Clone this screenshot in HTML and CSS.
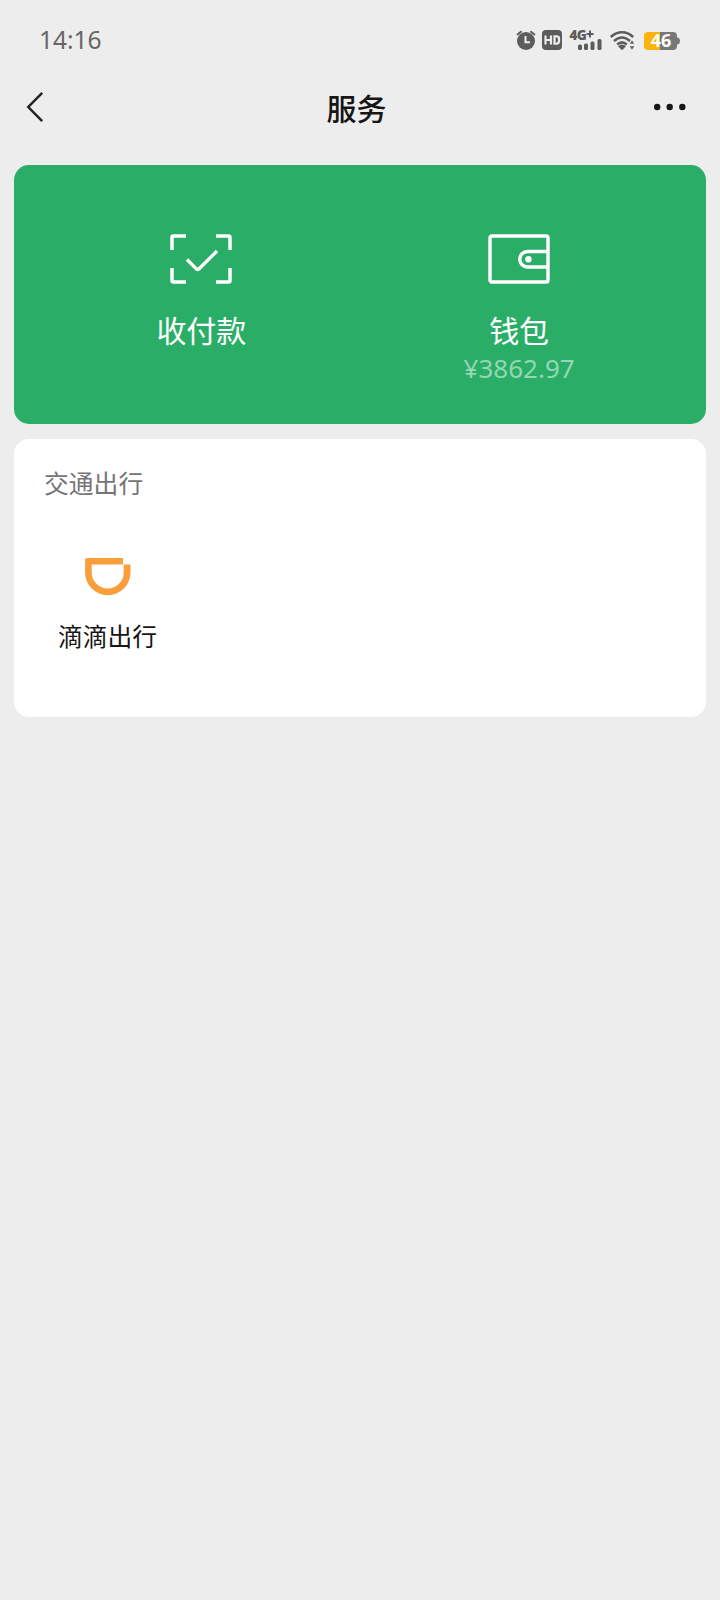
FILE: index.html
```html
<!DOCTYPE html>
<html lang="zh-CN">
<head>
<meta charset="utf-8">
<title>服务</title>
<link rel="stylesheet" href="styles.css">
</head>
<body>
<div class="status">
  <span class="time">14:16</span>
  <svg class="status-icons" width="170" height="30" viewBox="0 0 170 30">
    <g fill="#5c5c5c">
      <circle cx="11" cy="16" r="9"/>
      <path d="M2.600 9.500 6 6.800M19.400 9.500 16 6.800" stroke="#5c5c5c" stroke-width="2" stroke-linecap="round"/>
      <path d="M10.500 11v6.300h4.500" fill="none" stroke="#ededed" stroke-width="2"/>
      <rect x="27" y="5" width="20" height="20" rx="4"/>
      <text class="net" x="54.500" y="15">4G</text>
      <path d="M71.500 8h7v2h-7zM74 5.500h2v7h-2z"/>
      <rect x="63" y="19.500" width="4" height="5.500" rx="1.500"/>
      <rect x="69" y="18.500" width="4" height="6.500" rx="1.500"/>
      <rect x="75.500" y="16.500" width="4" height="8.500" rx="1.500"/>
      <rect x="82.500" y="14" width="4" height="11" rx="1.500"/>
      <path d="M107 25.200l-4-4q4-3.300 8 0z"/>
      <path d="M114.700 18.800l2.300-3.300 2.300 3.300zM114.700 21.300l2.300 3.400 2.300-3.400z"/>
    </g>
    <path d="M30.500 10.500v9M36 10.500v9M30.500 15H36M39.500 11.400v7.200h2q2.500 0 2.500-2v-3.200q0-2-2.500-2z" fill="none" stroke="#ededed" stroke-width="2.200"/>
    <path class="wifi" d="M95.800 12Q101 7.300 107 7.300T118.200 12M99 16q8-7 16 0M102.200 19.500q4.800-4.300 9.600 0"/>
    <path d="M133 7h12v18h-12a4 4 0 0 1-4-4V11a4 4 0 0 1 4-4z" fill="#fbb40a"/>
    <path d="M145 7h13a4 4 0 0 1 4 4v1.500q3 .3 3 3.500t-3 3.500V21a4 4 0 0 1-4 4H145z" fill="#777"/>
    <text class="battery" x="146" y="22.200">46</text>
  </svg>
</div>
<header class="nav">
  <svg width="18" height="32" viewBox="0 0 18 32"><path d="M16.200 1.800 2.300 16l13.900 14.200" fill="none" stroke="#222" stroke-width="2.500"/></svg>
  <h1>服务</h1>
  <svg width="32" height="8" viewBox="0 0 32 8" fill="#161616"><circle cx="3.200" cy="4" r="3.200"/><circle cx="15.700" cy="4" r="3.200"/><circle cx="28.300" cy="4" r="3.200"/></svg>
</header>
<main>
  <section class="card pay">
    <div class="entry">
      <svg width="62" height="50" viewBox="0 0 62 50" fill="none" stroke="#fff" stroke-width="3.500">
        <path d="M2 16V3.500Q2 2 3.500 2H16M46 2h12.500Q60 2 60 3.500V16M60 34v12.500q0 1.500-1.500 1.500H46M16 48H3.500Q2 48 2 46.500V34"/>
        <path d="M17 25.500 26.500 35q1.200 1.200 2.400 0L47 17" stroke-width="3.300"/>
      </svg>
      <span class="label">收付款</span>
    </div>
    <div class="entry wallet">
      <svg width="62" height="50" viewBox="0 0 62 50" fill="none" stroke="#fff" stroke-width="3.400">
        <rect x="2" y="2" width="58" height="46" rx="1.800"/>
        <path d="M60 17.500H39.500a7.750 7.750 0 0 0 0 15.500H60"/>
        <circle cx="40.500" cy="25.300" r="3.200" fill="#fff" stroke="none"/>
      </svg>
      <span class="label">钱包</span>
      <span class="amount">¥3862.97</span>
    </div>
  </section>
  <section class="card travel">
    <h2>交通出行</h2>
    <div class="service">
      <svg width="46" height="38" viewBox="0 0 46 38"><path fill="#fa9d3b" fill-rule="evenodd" d="M2 0h36v6.500h7.500v8a22.700 22.700 0 0 1-45.400 0V2Q0 0 2 0zM6.700 6.500v8a16 16 0 0 0 32 0v-8z"/></svg>
      <span>滴滴出行</span>
    </div>
  </section>
</main>
</body>
</html>
```
FILE: styles.css
```css
* { box-sizing: border-box; }
body {
  margin: 0;
  min-height: 1600px;
  background: #ededed;
  color: #161616;
  font-family: "Noto Sans CJK SC", sans-serif;
}
svg { display: block; flex: none; }
.status {
  height: 80px;
  padding: 0 35px 0 39px;
  display: flex;
  align-items: center;
  justify-content: space-between;
}
.time {
  font: 24.5px/30px "Noto Sans", sans-serif;
  color: #666;
}
.net { font: 800 13.5px "Open Sans", sans-serif; letter-spacing: -.6px; }
.battery { font: 700 18px "Noto Sans", sans-serif; fill: #fff; text-anchor: middle; }
.wifi { fill: none; stroke: #5c5c5c; stroke-width: 2.5; }
.nav {
  height: 85px;
  padding: 12px 34px 0 26px;
  display: flex;
  justify-content: space-between;
  align-items: flex-start;
}
.nav svg:first-child { margin-top: -1px; }
.nav svg:last-child { margin-top: 11px; }
.nav h1 {
  margin: -7px 0 0 15px;
  font-size: 30px;
  line-height: 44px;
  font-weight: 500;
}
main { padding: 0 14.5px 0 14px; }
.card { border-radius: 15px; }
.pay {
  height: 259px;
  padding: 69px 29px 0;
  background: #2aae67;
  display: grid;
  grid-template-columns: 1fr 1fr;
}
.entry {
  display: flex;
  flex-direction: column;
  align-items: center;
  color: #fff;
}
.wallet { padding-left: 2px; }
.label { margin-top: 23px; font-size: 30px; line-height: 44px; }
.amount {
  margin-top: 1px;
  font: 26px/32px "Noto Sans", sans-serif;
  color: #94d7b3;
}
.travel {
  margin-top: 15px;
  height: 278px;
  padding: 25px 29px 26px 30px;
  background: #fff;
}
.travel h2 {
  margin: 0;
  font-size: 24.8px;
  line-height: 36px;
  font-weight: 400;
  color: #757575;
}
.service {
  width: 127px;
  margin-top: 57.5px;
  display: flex;
  flex-direction: column;
  align-items: center;
  font-size: 24.8px;
  line-height: 36px;
}
.service span { margin-top: 21px; }
```
